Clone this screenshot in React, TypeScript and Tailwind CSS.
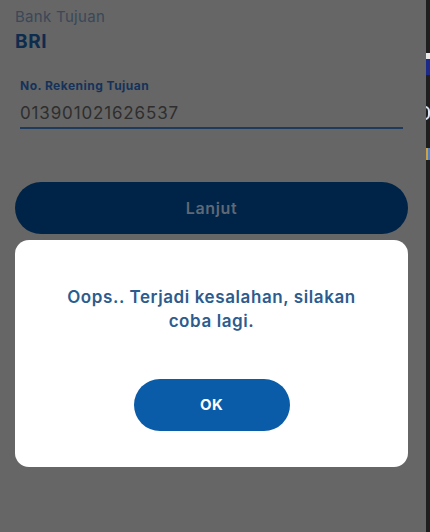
import React from 'react';

const font = { fontFamily: 'Inter, "Noto Sans", sans-serif' };

function EdgeStrip() {
  // sliver of another window peeking in at the right edge
  return (
    <div className="relative w-[4px] h-full bg-[#1e1e1e] overflow-hidden">
      <div className="absolute left-0 top-[53px] w-[4px] h-[6px] bg-[#e8e8e8]" />
      <div className="absolute left-0 top-[59px] w-[4px] h-[16px] bg-[#1b2a86]" />
      <div className="absolute left-[-6px] top-[106px] w-[10px] h-[14px] rounded-full border-2 border-[#d7e3f2]" />
      <div className="absolute left-0 top-[148px] w-[2px] h-[12px] bg-[#c9a24a]" />
      <div className="absolute left-[2px] top-[148px] w-[2px] h-[12px] bg-[#4a7fc0]" />
    </div>
  );
}

export default function App() {
  return (
    <div className="flex w-[430px] h-[532px] overflow-hidden" style={font}>
      <div className="flex flex-col w-[426px] h-full bg-[#666666] pl-[15px] pr-[18px] pt-[7px]">
        <p className="text-[15px] leading-[20px] tracking-[0.02em] text-[#3a4858]">Bank Tujuan</p>
        <p className="mt-[3px] text-[19px] leading-[24px] font-bold tracking-[0.03em] text-[#0e2c4e]">BRI</p>

        <div className="mx-[5px] mt-[24px]">
          <p className="text-[12px] leading-[16px] font-bold tracking-[0.04em] text-[#14325a]">No. Rekening Tujuan</p>
          <p className="mt-[7px] text-[17px] leading-[24px] tracking-[0.05em] text-[#2e2e2e]">013901021626537</p>
          <div className="mt-[2px] h-[2px] bg-[#1e3a5c]" />
        </div>

        <button className="mt-[53px] h-[52px] w-full rounded-full bg-[#002447] text-[16px] font-semibold tracking-[0.04em] text-[#5f6876]">
          Lanjut
        </button>

        <div className="mt-[6px] flex flex-col items-center rounded-[14px] bg-white pt-[45px] pb-[36px]">
          <p className="text-center text-[17px] leading-[24px] font-semibold tracking-[0.035em] text-[#2c5c8e] px-4">
            Oops.. Terjadi kesalahan, silakan
            <br />
            coba lagi.
          </p>
          <button className="mt-[46px] h-[52px] w-[156px] rounded-full bg-[#0b5ca8] text-[15px] font-bold tracking-[0.03em] text-white">
            OK
          </button>
        </div>
      </div>
      <EdgeStrip />
    </div>
  );
}
